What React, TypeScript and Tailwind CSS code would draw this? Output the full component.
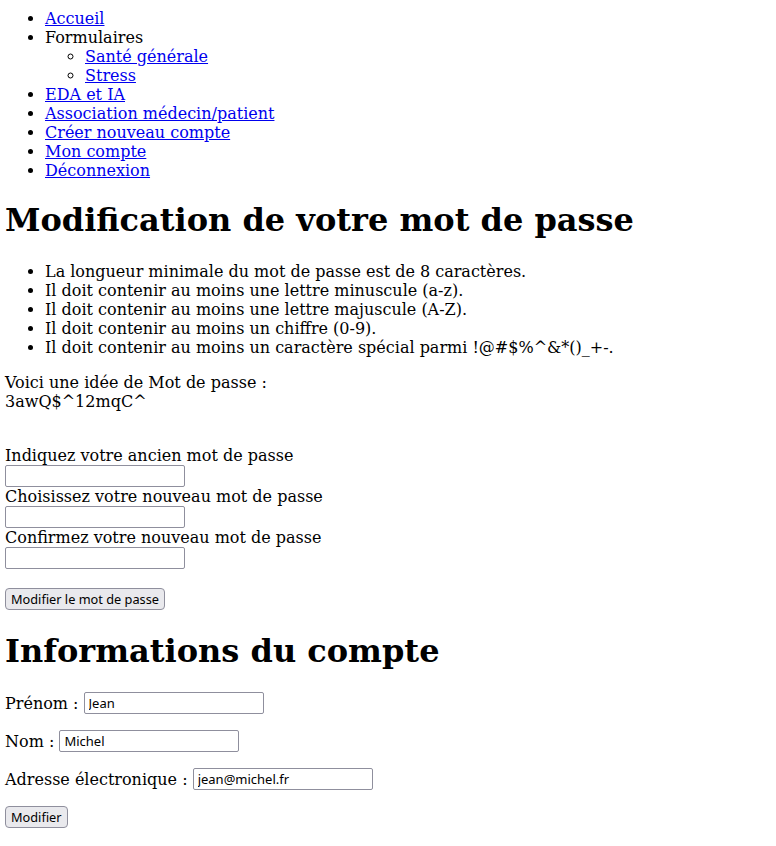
const navLink = "text-[#0000ee] underline";

const rules = [
  "La longueur minimale du mot de passe est de 8 caractères.",
  "Il doit contenir au moins une lettre minuscule (a-z).",
  "Il doit contenir au moins une lettre majuscule (A-Z).",
  "Il doit contenir au moins un chiffre (0-9).",
  "Il doit contenir au moins un caractère spécial parmi !@#$%^&*()_+-.",
];

const inputCls =
  "block w-[180px] h-[22px] border border-[#8f8f9d] rounded-[2px] bg-white px-1 font-['Noto_Sans',sans-serif] text-[13px] leading-[20px] text-black";

const btnCls =
  "h-[22px] px-[5px] border border-[#8f8f9d] rounded-[4px] bg-[#e9e9ed] font-['Noto_Sans',sans-serif] text-[12.75px] leading-[20px] text-black";

function PasswordField({ label }: { label: string }) {
  return (
    <div>
      <label className="block">{label}</label>
      <input type="password" className={inputCls} />
    </div>
  );
}

function InfoRow({ label, value }: { label: string; value: string }) {
  return (
    <p className="flex items-center h-[22px] mb-4">
      <span>{label}&nbsp;:&nbsp;</span>
      <input type="text" defaultValue={value} className={inputCls} />
    </p>
  );
}

export default function App() {
  return (
    <div className="min-h-screen bg-white px-[5px] pt-[9px] pb-4 font-['DejaVu_Serif',serif] text-base leading-[19px] text-black">
      <ul className="list-disc pl-10">
        <li>
          <a href="#" className={navLink}>Accueil</a>
        </li>
        <li>
          Formulaires
          <ul className="list-[circle] pl-10">
            <li>
              <a href="#" className={navLink}>Santé générale</a>
            </li>
            <li>
              <a href="#" className={navLink}>Stress</a>
            </li>
          </ul>
        </li>
        <li>
          <a href="#" className={navLink}>EDA et IA</a>
        </li>
        <li>
          <a href="#" className={navLink}>Association médecin/patient</a>
        </li>
        <li>
          <a href="#" className={navLink}>Créer nouveau compte</a>
        </li>
        <li>
          <a href="#" className={navLink}>Mon compte</a>
        </li>
        <li>
          <a href="#" className={navLink}>Déconnexion</a>
        </li>
      </ul>

      <h1 className="mt-[22px] mb-[23px] text-[32px] leading-[37px] font-bold">
        Modification de votre mot de passe
      </h1>

      <ul className="list-disc pl-10">
        {rules.map((r) => (
          <li key={r}>{r}</li>
        ))}
      </ul>

      <div className="mt-4">
        <div>Voici une idée de Mot de passe :</div>
        <div>3awQ$^12mqC^</div>
      </div>

      <form className="mt-[35px]" onSubmit={(e) => e.preventDefault()}>
        <PasswordField label="Indiquez votre ancien mot de passe" />
        <PasswordField label="Choisissez votre nouveau mot de passe" />
        <PasswordField label="Confirmez votre nouveau mot de passe" />
        <button type="submit" className={btnCls + " mt-[19px]"}>
          Modifier le mot de passe
        </button>
      </form>

      <h1 className="mt-[23px] text-[32px] leading-[37px] font-bold">
        Informations du compte
      </h1>

      <form className="mt-[22px]" onSubmit={(e) => e.preventDefault()}>
        <InfoRow label="Prénom" value="Jean" />
        <InfoRow label="Nom" value="Michel" />
        <InfoRow label="Adresse électronique" value="jean@michel.fr" />
        <button type="submit" className={btnCls}>
          Modifier
        </button>
      </form>
    </div>
  );
}
